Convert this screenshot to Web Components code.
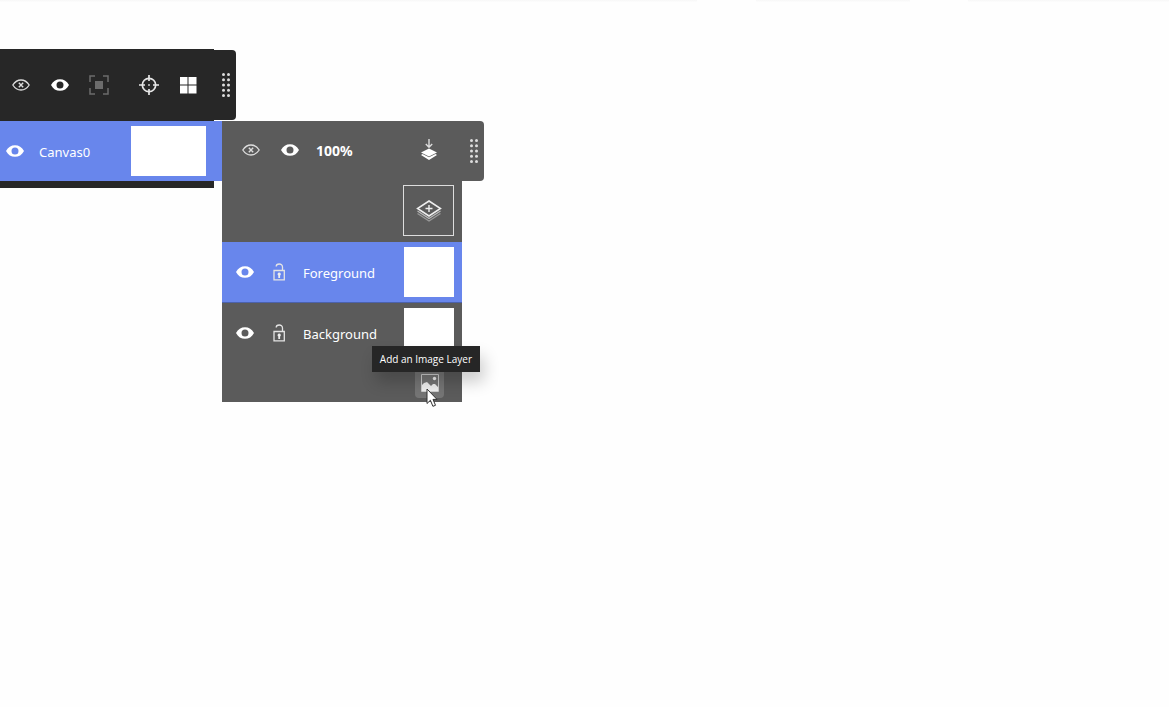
<!DOCTYPE html>
<html lang="en">
<head>
<meta charset="utf-8">
<title>Canvas layers</title>
<style>
  body { margin: 0; background: #fefefe; color: #fff; font: 13px/20px "Noto Sans", "Open Sans", sans-serif; }
</style>
</head>
<body>
<layer-workspace></layer-workspace>
<script>
const GLYPHS = {
  eye: [18, 18, '<path fill="#fff" fill-rule="evenodd" d="M0 9C2 5 5.200 3.200 9 3.200s7 1.800 9 5.800c-2 4-5.200 5.800-9 5.800S2 13 0 9zm9-3.500a3.500 3.500 0 1 0 0 7 3.500 3.500 0 0 0 0-7z"/>'],
  hide: [18, 18, '<g fill="none" stroke="#ddd"><path stroke-width="1.300" d="M.8 9C3 5.600 5.600 4 9 4s6 1.600 8.200 5C15 12.400 12.400 14 9 14S3 12.400.8 9z"/><path stroke-width="1.400" d="m6.800 6.800 4.400 4.400m0-4.400-4.400 4.400"/></g>'],
  focus: [20, 20, '<path fill="none" stroke="#6c6c6c" stroke-width="1.500" d="M1 7V1h5M14 1h5v6M19 13v6h-5M6 19H1v-6"/><path fill="#6c6c6c" d="M6 6h8v8H6z"/>'],
  target: [20, 20, '<g fill="none" stroke="#e6e6e6" stroke-width="1.700"><circle cx="10" cy="10" r="6.700"/><path d="M10 0v6M10 14v6M0 10h6M14 10h6"/></g><circle cx="10" cy="10" r="1" fill="#ccc"/>'],
  grid: [18, 18, '<path fill="#fff" d="M1 1h7.500v7.500H1zM9.500 1h8v7.500h-8zM1 9.500h7.500v8H1zM9.500 9.500h8v8h-8z"/>'],
  grip: [8, 26, [2.5, 7.75, 13, 18.25, 23.5].map(y => `<circle cx="1.500" cy="${y}" r="1.500" fill="#ddd"/><circle cx="6.500" cy="${y}" r="1.500" fill="#ddd"/>`).join('')],
  flatten: [18, 22, '<path fill="none" stroke="#ddd" stroke-width="1.400" d="M9 0v8M5.800 5 9 8.200 12.200 5"/><path fill="#fff" d="m9 9.500 8 4-8 4-8-4z"/><path fill="#fff" d="m1 16 1.500-1L9 18.300l6.500-3.300 1.500 1-8 5z"/>'],
  add: [26, 24, '<g fill="none" stroke="#eee"><path stroke-width="1.500" d="m13 2 11.500 7.500L13 17 1.500 9.500z"/><path stroke-width="1.400" d="M13 6v7M9.500 9.500h7"/><path stroke="#bbb" stroke-width="1.200" d="M1.500 12 13 19.500 24.500 12"/><path stroke="#999" stroke-width="1.200" d="M1.500 14.500 13 22l11.500-7.500"/></g>'],
  lock: [12, 18, '<path fill="none" stroke="#e4e4e4" stroke-width="1.300" d="M1 7.500h10.300v9.300H1zM9.500 7.500V4.200C9.500 2 8 1 6.200 1S3.200 2 3.200 3.500"/><path fill="#eee" d="M6.200 9.500a1.700 1.700 0 0 1 .9 3.100V15H5.300v-2.400a1.700 1.700 0 0 1 .9-3.100z"/>'],
  image: [18, 18, '<path fill="none" stroke="#ccc" d="M.5.5h17v17H.5z"/><path fill="#eee" d="M1 11 3 9 6 8 8 10 10 12 12 10 14 10 17 13v4H1z"/><circle cx="13.500" cy="4.500" r="1.700" fill="#eee"/>'],
  cursor: [12, 20, '<path fill="#fff" stroke="#333" stroke-width="1" d="M1 1v14.500l3.400-3.200 2.500 6 2.600-1-2.500-5.900H11z"/>']
};

function define(name, css, html) {
  customElements.define(name, class extends HTMLElement {
    connectedCallback() {
      if (this.shadowRoot) return;
      const root = this.attachShadow({ mode: 'open' });
      root.innerHTML = `<style>${css}</style>${typeof html === 'function' ? html(this) : html}`;
    }
  });
}

define('ui-icon', ':host{display:block;flex:none}svg{display:block}', el => {
  const [w, h, art] = GLYPHS[el.getAttribute('name')];
  return `<svg width="${w}" height="${h}" viewBox="0 0 ${w} ${h}" aria-hidden="true">${art}</svg>`;
});

define('icon-button', `
  :host { display: block; flex: none; width: 38px; height: 38px; }
  button { display: grid; place-items: center; box-sizing: border-box; width: 100%; height: 100%; margin: 0; padding: 0;
    border: var(--button-border, 0); border-radius: var(--button-radius, 0); background: var(--button-fill, transparent); }
`, el => `<button type="button" aria-label="${el.getAttribute('label')}"><ui-icon name="${el.getAttribute('icon')}"></ui-icon></button>`);

define('drag-handle', `
  :host { display: grid; place-items: center; box-sizing: border-box; flex: none; width: 22px; padding-left: 1px; border-radius: 0 4px 4px 0; }
`, '<ui-icon name="grip"></ui-icon>');

define('layer-row', `
  :host { display: flex; align-items: center; box-sizing: border-box; height: 61px; padding: 0 8px 0 4px; border-bottom: 1px solid transparent; }
  :host([selected]) { background: #6886ec; border-bottom-color: #4c62ac; }
  .lock { width: 30px; }
  .name { flex: 1; margin-left: 9px; padding-top: 2px; }
  .thumb { width: 50px; height: 50px; background: #fff; }
`, `<icon-button icon="eye" label="Toggle visibility"></icon-button>
  <icon-button class="lock" icon="lock" label="Toggle lock"></icon-button>
  <span class="name"><slot></slot></span><div class="thumb"></div>`);

define('canvas-panel', `
  :host { display: block; flex: none; width: 222px; }
  header { display: flex; width: max-content; align-items: center; }
  .tools { display: flex; gap: 1px; align-items: center; box-sizing: border-box; width: 214px; height: 72px; padding-left: 2px; background: #272727; }
  .group { margin-left: 11px; }
  drag-handle { height: 70px; background: #272727; }
  .canvas { display: flex; align-items: center; height: 60px; padding-right: 16px; background: #6886ec; }
  .eye { width: 30px; }
  .name { flex: 1; margin-left: 9px; padding-top: 2px; }
  .thumb { width: 75px; height: 50px; background: #fff; }
  footer { width: 214px; height: 7px; background: #272727; }
`, `<header><div class="tools">
    <icon-button icon="hide" label="Hide all canvases"></icon-button>
    <icon-button icon="eye" label="Show all canvases"></icon-button>
    <icon-button icon="focus" label="Frame canvas"></icon-button>
    <icon-button class="group" icon="target" label="Center view"></icon-button>
    <icon-button icon="grid" label="Grid view"></icon-button>
  </div><drag-handle></drag-handle></header>
  <div class="canvas"><icon-button class="eye" icon="eye" label="Toggle canvas"></icon-button><span class="name">Canvas0</span><div class="thumb"></div></div>
  <footer></footer>`);

define('tool-tip', `
  :host { display: block; padding: 3px 8px; background: #262626; font: 10px/20px "Open Sans", sans-serif; white-space: nowrap; box-shadow: 4px 10px 16px rgba(0,0,0,.2); }
`, '<slot></slot>');

define('layers-panel', `
  :host { display: block; flex: none; width: 240px; margin-top: 72px; background: #5b5b5b; }
  header { display: flex; width: max-content; background: #5b5b5b; border-radius: 0 4px 4px 0; }
  .tools { display: flex; gap: 1px; align-items: center; box-sizing: border-box; width: 240px; height: 60px; padding: 0 14px 2px 10px; }
  .opacity { flex: 1; padding: 2px 0 0 6px; border: 0; background: none; color: inherit; font: inherit; font-size: 14px; font-weight: 700; text-align: left; }
  .add { display: flex; justify-content: flex-end; height: 57px; padding: 4px 8px 0 0; }
  .add icon-button { width: 51px; height: 51px; --button-border: 1px solid #ddd; }
  footer { position: relative; display: flex; justify-content: flex-end; height: 34px; padding: 4px 18px 0 0; }
  footer icon-button { width: 29px; height: 30px; --button-fill: #757575; --button-radius: 4px; }
  tool-tip { position: absolute; right: -18px; bottom: 30px; }
  .cursor { position: absolute; right: 24px; bottom: -6px; }
`, `<header><div class="tools">
    <icon-button icon="hide" label="Hide all layers"></icon-button>
    <icon-button icon="eye" label="Show all layers"></icon-button>
    <button class="opacity" type="button">100%</button>
    <icon-button icon="flatten" label="Merge down"></icon-button>
  </div><drag-handle></drag-handle></header>
  <div class="add"><icon-button icon="add" label="Add a layer"></icon-button></div>
  <layer-row selected>Foreground</layer-row>
  <layer-row>Background</layer-row>
  <footer><icon-button icon="image" label="Add an Image Layer"></icon-button>
    <tool-tip role="tooltip">Add an Image Layer</tool-tip><ui-icon class="cursor" name="cursor"></ui-icon></footer>`);

define('layer-workspace', `
  :host { display: block; min-height: 100vh; }
  .edge { display: grid; grid-template-columns: 59fr 13fr 17fr; column-gap: 5%; height: 2px; }
  .edge i { background: linear-gradient(#f7f7f7, #fdfdfd); }
  main { display: flex; align-items: flex-start; padding-top: 47px; }
`, '<div class="edge"><i></i><i></i><i></i></div><main><canvas-panel></canvas-panel><layers-panel></layers-panel></main>');
</script>
</body>
</html>
